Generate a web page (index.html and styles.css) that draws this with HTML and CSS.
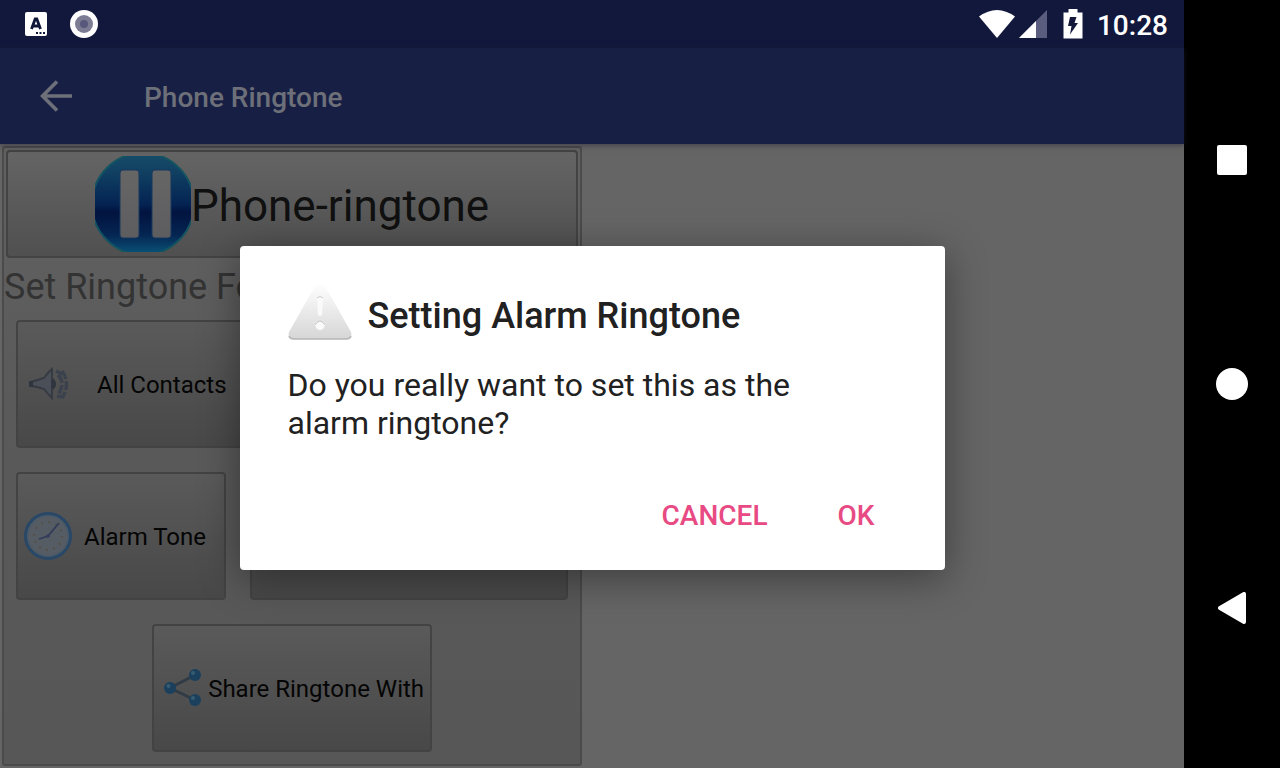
FILE: index.html
```html
<!DOCTYPE html>
<html lang="en">
<head>
<meta charset="utf-8">
<meta name="viewport" content="width=device-width, initial-scale=1">
<title>Phone Ringtone</title>
<link rel="stylesheet" href="styles.css">
</head>
<body>
<div class="device">
  <div class="screen">
    <header class="status-bar">
      <div class="status-group notifications">
        <svg class="note-icon" viewBox="0 0 24 26" aria-hidden="true">
          <rect x="1" y="1" width="22" height="24" rx="2" fill="#fff"/>
          <path d="M7.500 18L11.200 8H12.800L16.500 18M9 15H15" fill="none" stroke="#10183a" stroke-width="2.800"/>
          <path d="M12 21h2v2h-2zM15.500 21h2v2h-2zM19 21h2v2h-2z" fill="#10183a"/>
        </svg>
        <svg class="ring-icon" viewBox="0 0 28 28" aria-hidden="true">
          <circle cx="14" cy="14" r="14" fill="#fff"/>
          <circle cx="14" cy="14" r="9" fill="#7c7d94"/>
          <circle cx="14" cy="14" r="4" fill="#56587c"/>
        </svg>
      </div>
      <div class="status-group system">
        <svg class="wifi-icon" viewBox="0 0 36 28" aria-hidden="true"><path d="M0 6.500Q18-6.500 36 6.500L18 28Z" fill="#fff"/></svg>
        <svg class="signal-icon" viewBox="0 0 28 28" aria-hidden="true">
          <path d="M28 0V28H0Z" fill="#5a5d7e"/>
          <path d="M17 11V28H0Z" fill="#fff"/>
        </svg>
        <svg class="battery-icon" viewBox="0 0 20 30" aria-hidden="true">
          <path d="M5.500 0h9v3.500H19.500V29.500H.5V3.500H5.500Z" fill="#fff"/>
          <path d="M7 8h6.500l-2 6h3.500L7 25.500l1.500-8.500H5Z" fill="#14193c"/>
        </svg>
        <time class="clock">10:28</time>
      </div>
    </header>
    <nav class="toolbar">
      <button class="back" type="button" aria-label="Back">
        <svg viewBox="0 0 32 32" aria-hidden="true"><path d="M32 16H3M17 1.500L2.500 16L17 30.500" fill="none" stroke="#6d7078" stroke-width="3.600"/></svg>
      </button>
      <h1 class="toolbar-title">Phone Ringtone</h1>
    </nav>
    <main class="content">
      <section class="panel">
        <button class="tile player" type="button">
          <svg class="pause-icon" viewBox="0 0 96 96" aria-hidden="true">
            <defs>
              <linearGradient id="disc" x1="0" y1="0" x2="0" y2="1">
                <stop offset="0" stop-color="#174d68"/>
                <stop offset=".2" stop-color="#103f62"/>
                <stop offset=".5" stop-color="#042453"/>
                <stop offset=".58" stop-color="#02133f"/>
                <stop offset=".8" stop-color="#052552"/>
                <stop offset="1" stop-color="#09567a"/>
              </linearGradient>
              <linearGradient id="bars" x1="0" y1="0" x2="0" y2="1">
                <stop offset="0" stop-color="#666"/>
                <stop offset="1" stop-color="#5d5d60"/>
              </linearGradient>
            </defs>
            <circle cx="48" cy="48" r="51" fill="url(#disc)" stroke="#145361" stroke-width="2"/>
            <rect x="25" y="14" width="19" height="68" rx="3" fill="url(#bars)" stroke="#18385e"/>
            <rect x="57" y="14" width="19" height="68" rx="3" fill="url(#bars)" stroke="#18385e"/>
          </svg>
          <span>Phone-ringtone</span>
        </button>
        <h2 class="panel-heading">Set Ringtone For</h2>
        <div class="tiles">
          <button class="tile contacts" type="button">
            <svg class="icon" viewBox="0 0 48 48" aria-hidden="true">
              <path d="M7 22L20 18Q24 12 28 9V38Q24 34 20 29L13 27L7 26Z" fill="#4b4f58" stroke="#353a43" stroke-width="2"/>
              <path d="M7 21v6M28 20q4 4 0 8" fill="none" stroke="#30343e" stroke-width="4"/>
              <path d="M34 15q8 8 0 20M38 11q9 13 0 27M32 11l6 3M33 36l5 1" fill="none" stroke="#3b424d" stroke-width="3.500" stroke-dasharray="9 2"/>
            </svg>
            <span>All Contacts</span>
          </button>
        </div>
        <div class="tiles">
          <button class="tile alarm" type="button">
            <svg class="icon" viewBox="0 0 48 48" aria-hidden="true">
              <circle cx="24" cy="24" r="22.500" fill="#555c63" stroke="#294766" stroke-width="3"/>
              <circle cx="24" cy="24" r="20" fill="none" stroke="#46596c"/>
              <circle cx="24" cy="24" r="14" fill="none" stroke="#555148" stroke-width="2" stroke-dasharray="2 5.330"/>
              <path d="M35 11L24 24L15 27" fill="none" stroke="#313b5a" stroke-width="1.800"/>
              <circle cx="24" cy="24" r="1.800" fill="#313b5a"/>
            </svg>
            <span>Alarm Tone</span>
          </button>
          <button class="tile wide" type="button" aria-label="Ringtone option"></button>
        </div>
        <div class="tiles last">
          <button class="tile share" type="button">
            <svg class="icon" viewBox="0 0 48 48" aria-hidden="true">
              <path d="M35 11L10 24L35 36" fill="none" stroke="#303b46" stroke-width="3"/>
              <g fill="#1b405d"><circle cx="35" cy="11" r="6"/><circle cx="10" cy="24" r="6"/><circle cx="35" cy="36" r="6"/></g>
              <g fill="#365c72"><circle cx="33" cy="9" r="2"/><circle cx="8.500" cy="22" r="2"/><circle cx="33" cy="34" r="2"/></g>
            </svg>
            <span>Share Ringtone With</span>
          </button>
        </div>
      </section>
    </main>
    <div class="overlay">
      <div class="dialog" role="alertdialog" aria-labelledby="dialog-title" aria-describedby="dialog-message">
        <div class="dialog-head">
          <svg class="warning-icon" viewBox="0 0 64 64" aria-hidden="true">
            <defs>
              <linearGradient id="warn" x1="0" y1="0" x2="0" y2="1">
                <stop offset="0" stop-color="#fff"/>
                <stop offset="1" stop-color="#d6d6d6"/>
              </linearGradient>
            </defs>
            <path d="M27 2Q32-4 37 2L63 48Q65 54 58 55H6Q-1 54 1 48Z" fill="url(#warn)"/>
            <path d="M1 52Q2 55 6 55H58Q62 55 63 52" fill="none" stroke="#b5b5b5" stroke-width="1.500"/>
            <path d="M29 14q3-3 6 0l-1 17q-2 2-4 0Z" fill="#fafafa"/>
            <path d="M29 14q3-3 6 0" fill="none" stroke="#ccc"/>
            <circle cx="32" cy="41.500" r="4.500" fill="#fafafa"/>
            <path d="M27.500 40.500q4.500-7 9 0" fill="none" stroke="#c4c4c4"/>
          </svg>
          <h2 class="dialog-title" id="dialog-title">Setting Alarm Ringtone</h2>
        </div>
        <p class="dialog-message" id="dialog-message">Do you really want to set this as the alarm ringtone?</p>
        <div class="dialog-actions">
          <button class="action" type="button">CANCEL</button>
          <button class="action" type="button">OK</button>
        </div>
      </div>
    </div>
  </div>
  <nav class="nav-bar">
    <button class="nav-key" type="button" aria-label="Recent apps"><svg viewBox="0 0 32 32" aria-hidden="true"><rect x="1" y="1" width="30" height="30" rx="2" fill="#fff"/></svg></button>
    <button class="nav-key" type="button" aria-label="Home"><svg viewBox="0 0 32 32" aria-hidden="true"><circle cx="16" cy="16" r="16" fill="#fff"/></svg></button>
    <button class="nav-key" type="button" aria-label="Back"><svg viewBox="0 0 32 32" aria-hidden="true"><path d="M4 16L28 2V30Z" fill="#fff" stroke="#fff" stroke-width="4" stroke-linejoin="round"/></svg></button>
  </nav>
</div>
</body>
</html>
```
FILE: styles.css
```css
* {
  box-sizing: border-box;
}

body {
  margin: 0;
  font-family: Roboto, "Liberation Sans", sans-serif;
  background: #000;
}

h1, h2, p {
  margin: 0;
  font-weight: 400;
}

button {
  font: inherit;
  border: 0;
  padding: 0;
  background: none;
}

svg {
  display: block;
  flex: none;
}

.device {
  display: flex;
  min-height: 100vh;
}

.screen {
  position: relative;
  flex: 1;
  display: flex;
  flex-direction: column;
  background: #656565;
}

.status-bar {
  height: 48px;
  padding: 0 16px 0 24px;
  display: flex;
  align-items: center;
  justify-content: space-between;
  background: #12183c;
  color: #fff;
}

.status-group {
  display: flex;
  align-items: center;
}

.notifications {
  gap: 22px;
}

.note-icon {
  width: 24px;
  height: 26px;
}

.ring-icon,
.signal-icon {
  width: 28px;
  height: 28px;
}

.wifi-icon {
  width: 36px;
  height: 28px;
  margin-right: 4px;
}

.battery-icon {
  width: 20px;
  height: 30px;
  margin: 0 14px 0 16px;
}

.clock {
  padding-top: 4px;
  font-size: 28px;
  font-weight: 500;
  line-height: 44px;
}

.toolbar {
  position: relative;
  height: 96px;
  padding-left: 40px;
  display: flex;
  align-items: center;
  gap: 72px;
  background: #181f45;
  box-shadow: 0 1px 6px rgba(30, 30, 50, 0.6);
}

.back svg {
  width: 32px;
  height: 32px;
}

.toolbar-title {
  padding-top: 2px;
  font-size: 28px;
  font-weight: 500;
  color: #6d7078;
}

.content {
  flex: 1;
  display: flex;
}

.panel {
  width: 49%;
  margin: 2px;
  padding: 2px;
  border: 2px solid #4b4b4b;
  border-radius: 3px;
  background: linear-gradient(#626262, #5a5a5a 40%, #575757);
}

.tile {
  display: flex;
  align-items: center;
  height: 128px;
  border: 2px solid #434343;
  border-radius: 4px;
  background: linear-gradient(#5a5a5a, #484848);
  font-size: 24px;
  color: #050505;
  white-space: nowrap;
}

.tile span {
  padding-top: 2px;
}

.player {
  width: 100%;
  height: 108px;
  justify-content: center;
  background: linear-gradient(#646464, #505050);
  font-size: 44px;
  color: #101010;
}

.player span {
  padding-top: 4px;
}

.pause-icon {
  width: 96px;
  height: 96px;
}

.panel-heading {
  margin-left: -2px;
  padding: 5px 0 9px;
  font-size: 36px;
  line-height: 48px;
  color: #333;
}

.tiles {
  display: flex;
  gap: 24px;
  padding: 0 10px 24px;
}

.last {
  justify-content: center;
  padding-bottom: 10px;
}

.icon {
  width: 48px;
  height: 48px;
}

.contacts {
  flex: 1;
  padding-left: 6px;
  gap: 25px;
}

.alarm {
  padding: 0 18px 0 6px;
  gap: 12px;
}

.wide {
  flex: 1;
}

.share {
  padding: 0 6px;
}

.overlay {
  position: absolute;
  inset: 48px 0 0;
  display: flex;
  align-items: center;
  justify-content: center;
}

.dialog {
  width: 60%;
  max-width: 705px;
  padding: 38px 48px 19px;
  border-radius: 4px;
  background: #fff;
  color: #212121;
  box-shadow: 0 8px 40px rgba(0, 0, 0, 0.4);
}

.dialog-head {
  display: flex;
  align-items: center;
  gap: 16px;
}

.warning-icon {
  width: 64px;
  height: 64px;
}

.dialog-title {
  font-size: 36px;
  font-weight: 500;
}

.dialog-message {
  padding: 18px 60px 37px 0;
  font-size: 32px;
  line-height: 38px;
}

.dialog-actions {
  display: flex;
  justify-content: flex-end;
  gap: 26px;
}

.action {
  min-width: 80px;
  height: 72px;
  padding: 0 22px;
  font-size: 28px;
  font-weight: 500;
  color: #e84a83;
}

.nav-bar {
  width: 96px;
  display: flex;
  flex-direction: column;
  justify-content: space-between;
  align-items: center;
  padding: 128px 0;
  background: #000;
}

.nav-key {
  padding: 16px;
}

.nav-key svg {
  width: 32px;
  height: 32px;
}
```
